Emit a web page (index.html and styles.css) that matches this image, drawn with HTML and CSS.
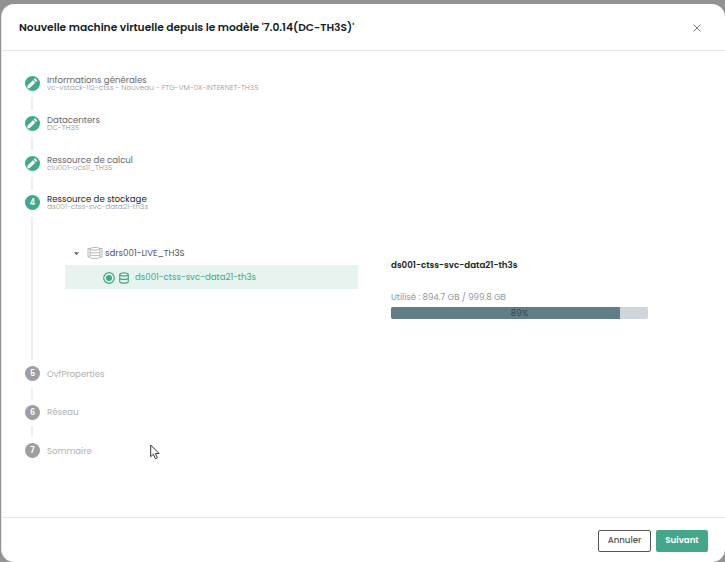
FILE: index.html
```html
<!DOCTYPE html>
<html lang="fr">
<head>
<meta charset="utf-8">
<title>Nouvelle machine virtuelle</title>
<link rel="stylesheet" href="styles.css">
</head>
<body>
<svg class="defs" width="0" height="0" aria-hidden="true">
  <symbol id="pencil" viewBox="0 0 24 24"><path d="M2.500 17V21.500H7L18 10.500 13.500 6zM21.200 7.300c.5-.5.5-1.100 0-1.600L18.300 2.800c-.5-.5-1.100-.5-1.600 0L14.600 4.900l4.500 4.500z"/></symbol>
</svg>
<main class="modal">
  <header class="header">
    <h1 class="title">Nouvelle machine virtuelle depuis le modèle '7.0.14(DC-TH3S)'</h1>
    <svg class="close" viewBox="0 0 8 8"><path d="M.5.5l7 7M7.500.5l-7 7"/></svg>
  </header>
  <section class="stepper">
    <div class="step done">
      <span class="badge"><svg><use href="#pencil"/></svg></span>
      <div class="label"><span class="name">Informations générales</span><span class="sub">vc-vstack-112-ctss - Nouveau - FTG-VM-0X-INTERNET-TH3S</span></div>
    </div>
    <div class="step done">
      <span class="badge"><svg><use href="#pencil"/></svg></span>
      <div class="label"><span class="name">Datacenters</span><span class="sub">DC-TH3S</span></div>
    </div>
    <div class="step done">
      <span class="badge"><svg><use href="#pencil"/></svg></span>
      <div class="label"><span class="name">Ressource de calcul</span><span class="sub">clu001-ucs11_TH3S</span></div>
    </div>
    <div class="step active">
      <span class="badge"><span>4</span></span>
      <div class="label"><span class="name">Ressource de stockage</span><span class="sub">ds001-ctss-svc-data21-th3s</span></div>
      <div class="content">
        <div class="tree">
          <div class="node">
            <svg class="caret" viewBox="0 0 6 4"><path d="M0 0h6L3 3.500z"/></svg>
            <svg class="cluster" viewBox="0 0 16 12"><path d="M3 1.500H1v8.500h2M13 1.500h2v8.500h-2M3 2c0-2 10-2 10 0v8c0 2-10 2-10 0zM3 2.200c1 1.200 9 1.200 10 0M3 5c1 1.200 9 1.200 10 0M3 7.700c1 1.200 9 1.200 10 0"/></svg>
            <span class="node-name">sdrs001-LIVE_TH3S</span>
          </div>
          <div class="node selected">
            <svg class="radio" viewBox="0 0 12 12"><circle class="ring" cx="6" cy="6" r="5.300"/><circle class="dot" cx="6" cy="6" r="3"/></svg>
            <svg class="disk" viewBox="0 0 10 12"><path d="M.7 2.600C.7.300 9.300.300 9.300 2.600v6.800c0 2.300-8.600 2.300-8.600 0zM.7 2.600c0 1.900 8.600 1.900 8.600 0M.7 6c0 1.900 8.600 1.900 8.600 0"/></svg>
            <span class="leaf-name">ds001-ctss-svc-data21-th3s</span>
          </div>
        </div>
        <div class="details">
          <h2 class="store">ds001-ctss-svc-data21-th3s</h2>
          <p class="usage">Utilisé : 894.7 GB / 999.8 GB</p>
          <div class="bar"><div class="fill" style="width:89.2%"></div><span class="percent">89%</span></div>
        </div>
      </div>
    </div>
    <div class="step todo">
      <span class="badge"><span>5</span></span>
      <div class="label"><span class="name">OvfProperties</span></div>
    </div>
    <div class="step todo">
      <span class="badge"><span>6</span></span>
      <div class="label"><span class="name">Réseau</span></div>
    </div>
    <div class="step todo">
      <span class="badge"><span>7</span></span>
      <div class="label"><span class="name">Sommaire</span></div>
    </div>
  </section>
  <footer class="footer">
    <button class="btn cancel">Annuler</button>
    <button class="btn next">Suivant</button>
  </footer>
</main>
<svg class="cursor" viewBox="0 0 10 16"><path d="M.7 1v11.700l2.700-2.500 2 4.500 2-.9-2-4.300h3.700z"/></svg>
</body>
</html>
```
FILE: styles.css
```css
* { box-sizing: border-box; }
body {
  margin: 0;
  height: 562px;
  overflow: hidden;
  padding: 4px 0 0 1px;
  background: #929292;
  font-family: Poppins, Inter, sans-serif;
  font-size: 8.6px;
  color: #333;
}
.defs { position: absolute; }
.modal {
  display: flex;
  flex-direction: column;
  width: 724px;
  height: 558px;
  background: #fff;
  border-left: 1px solid #e4e4e4;
  border-radius: 13px;
}
.header {
  display: flex;
  align-items: center;
  justify-content: space-between;
  height: 47px;
  padding: 0 24px 0 17px;
  border-bottom: 1px solid #e8e8e8;
}
.title { margin: 2px 0 0; font-size: 10.680px; font-weight: 600; color: #142328; white-space: nowrap; }
.close { width: 8px; height: 8px; margin-top: 1px; fill: none; stroke: #777; stroke-width: 1; }
.stepper { flex: 1; padding: 24.500px 0 0 23px; }
.step {
  position: relative;
  display: grid;
  grid-template-columns: 15px 1fr;
  grid-template-rows: 15px 1fr;
  column-gap: 7px;
  height: 40px;
}
.step::before {
  content: "";
  position: absolute;
  left: 6px;
  top: 21.500px;
  bottom: 6px;
  width: 2px;
  background: #eee;
}
.step:last-child::before { display: none; }
.step.active { height: 171px; margin-top: -.5px; }
.step.todo { height: 38.5px; }
.badge {
  display: flex;
  align-items: center;
  justify-content: center;
  width: 15px;
  height: 15px;
  border-radius: 50%;
  background: #42a78b;
  color: #fff;
  font-size: 8px;
  line-height: 10px;
  font-weight: 600;
}
.badge span { padding-top: 1px; }
.badge svg { width: 12.500px; height: 12.500px; fill: #fff; }
.todo .badge { background: #9e9e9e; }
.label { display: flex; flex-direction: column; justify-content: center; line-height: 8px; white-space: nowrap; }
.done .label { padding-top: 1px; }
.name { color: #666; }
.active .name { color: #252525; }
.todo .name { color: #b0b0b0; }
.sub { font-size: 7.350px; font-weight: 300; color: #959595; }
.content { grid-column: 1 / -1; display: flex; padding: 31px 0 0 40px; }
.tree { width: 293px; }
.node { display: flex; align-items: center; height: 24px; padding-left: 9px; white-space: nowrap; }
.caret { width: 5px; height: 4px; margin: 2px 8px 0 0; fill: #666; }
.cluster { width: 16px; height: 12px; margin-right: 2px; fill: none; stroke: #999; stroke-width: .7; }
.node-name { color: #555; font-size: 8.650px; }
.selected { padding-left: 38px; background: #e6f3ef; color: #42a78b; }
.radio { width: 12px; height: 12px; margin-top: 1px; }
.ring { fill: none; stroke: #42a78b; stroke-width: 1.200; }
.dot { fill: #42a78b; }
.disk { width: 10px; height: 12px; margin: 1px 6px 0 4px; fill: none; stroke: #42a78b; stroke-width: 1.200; }
.details { width: 257px; margin: 18px 0 0 33px; }
.store { margin: 0; font-size: 8.680px; line-height: 12px; font-weight: 600; color: #202427; }
.usage { margin: 19px 0 0; line-height: 14px; color: #8c969e; }
.bar { position: relative; height: 12px; margin-top: 3px; border-radius: 2px; overflow: hidden; background: #ced6da; }
.fill { height: 12px; background: #607d88; }
.percent { position: absolute; inset: 0; text-align: center; line-height: 12px; color: #34464f; }
.footer {
  display: flex;
  justify-content: flex-end;
  gap: 5px;
  height: 45px;
  padding: 11px 17px 0 0;
  border-top: 1px solid #e8e8e8;
}
.btn { height: 22px; margin-top: .5px; padding: 0; border-radius: 2px; font: 500 8.650px Poppins, Inter, sans-serif; }
.cancel { width: 53px; border: 1px solid #555; background: #fff; color: #555; }
.next { width: 52px; border: 0; background: #42a78b; color: #fff; font-weight: 600; }
.cursor { position: absolute; left: 150px; top: 443.500px; width: 10px; height: 16px; fill: #fff; stroke: #333; stroke-width: 1; }
```
